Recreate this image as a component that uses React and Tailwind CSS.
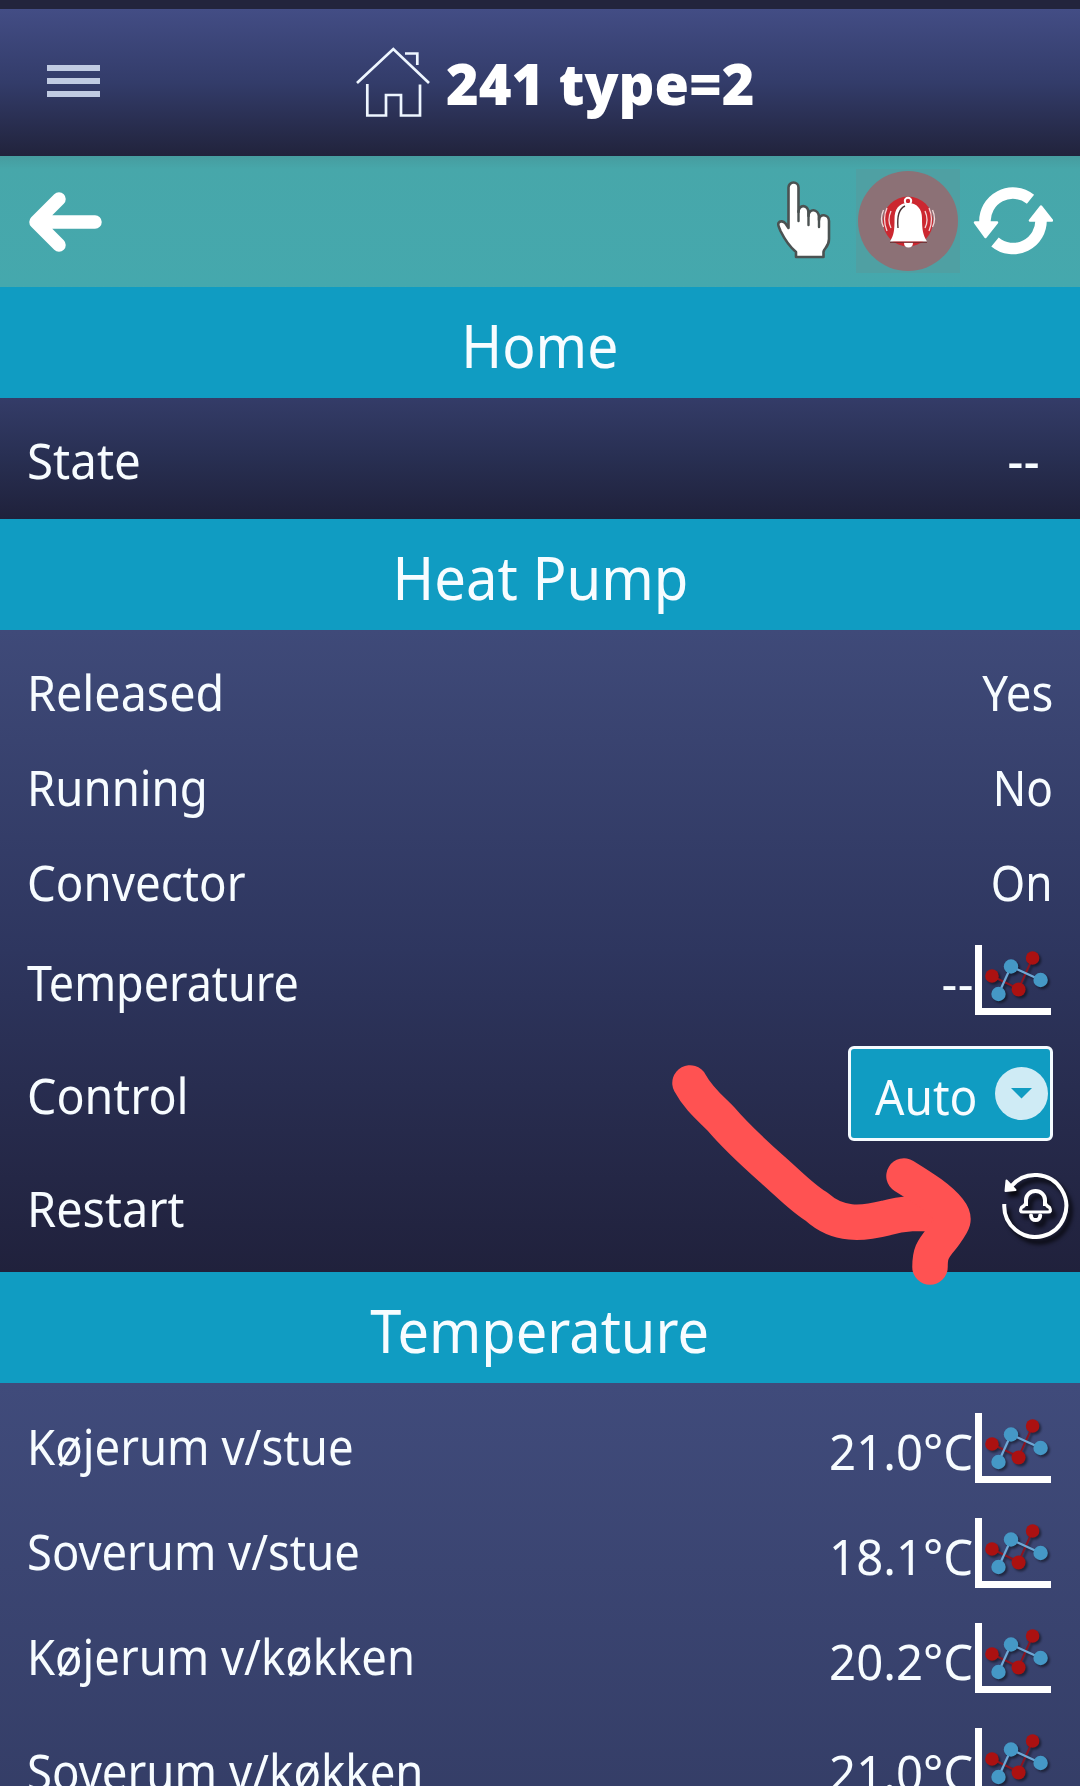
import React from "react";

const body = "inline-block whitespace-nowrap text-[49px] leading-none";

function SectionTitle({ children, scale }) {
  return (
    <h2 className="flex h-[111px] shrink-0 items-center justify-center bg-[#109cc2] pt-[4px]">
      <span className={`inline-block whitespace-nowrap text-[61px] leading-none ${scale}`}>{children}</span>
    </h2>
  );
}

function Row({ label, scale, height, pad = "", children }) {
  return (
    <div className={`flex shrink-0 items-center justify-between pl-[27px] pr-[27px] ${height}`}>
      <span className={`${body} origin-left ${scale} ${pad}`}>{label}</span>
      <div className="flex items-center">{children}</div>
    </div>
  );
}

function Dashes({ className }) {
  return (
    <span className={`text-[49px] leading-none tracking-[0.5px] origin-right inline-block ${className}`}>--</span>
  );
}

function ChartIcon() {
  return (
    <svg width="79" height="72" viewBox="0 0 79 72" className="-mr-[1px] shrink-0">
      <g className="drop-shadow-[2px_2px_1px_rgba(0,0,0,0.45)]">
        <path d="M17 31L43.6 44L57.6 13" fill="none" stroke="#8c1420" strokeWidth="2" />
        <circle cx="17" cy="31" r="6.8" fill="#ab1111" />
        <circle cx="43.6" cy="44.5" r="7" fill="#ab1111" />
        <circle cx="57.6" cy="13" r="6.8" fill="#ab1111" />
        <path d="M23.5 49L36 21.5L65.6 35" fill="none" stroke="#6fa8d6" strokeWidth="2.2" />
        <circle cx="23.5" cy="49" r="7.2" fill="#4598c6" />
        <circle cx="36" cy="21.5" r="7.2" fill="#4598c6" />
        <circle cx="65.6" cy="35" r="7.2" fill="#4598c6" />
      </g>
      <path d="M0 0H7V63H76V70H0Z" fill="#fff" />
    </svg>
  );
}

function RestartIcon() {
  return (
    <svg width="70" height="76" viewBox="0 0 70 76" className="-mr-[17px] overflow-visible drop-shadow-[4px_5px_2px_rgba(0,0,0,0.8)]">
      <g fill="none" stroke="#fff" strokeLinejoin="round">
        <path d="M11.500 17A31 31 0 1 1 4.300 35" strokeWidth="4" />
        <path d="M26 37V31a9.500 9 0 0 1 19 0v6" strokeWidth="4" />
        <path d="M26 33Q25.500 36.500 21.500 38.500Q19 43 23 43H48Q52 43 49.500 38.500Q45.500 36.500 45 33" strokeWidth="3.200" />
        <path d="M31 46.500a4.600 4.600 0 0 0 9.200 0" strokeWidth="4" strokeLinecap="round" />
      </g>
      <path d="M6.500 11.500L15.500 21L5.500 22Z" fill="#fff" stroke="#fff" strokeWidth="2" strokeLinejoin="round" />
    </svg>
  );
}

function HandIcon() {
  return (
    <svg width="56" height="82" viewBox="0 0 56 82" className="mt-[3px]">
      <path
        d="M12.500 6.500a5 5 0 0 1 10 0V31c0-8 10-8 10 1v3c0-8 10-7.500 10.500 1v3c0-7 10-6 10 1V58c0 8-5 9-5.500 13v5H20v-5C14 66 9 59 4.500 50C3 46 1.500 44 2.500 42c1.500-2.500 5-2 7 .5l3 4.500Z"
        fill="#fff" stroke="#4b5252" strokeWidth="2.600" strokeLinejoin="round"
      />
      <path d="M22.500 30v10M32.500 32v12M43 36v10" stroke="#4b5252" strokeWidth="2.400" strokeLinecap="round" />
    </svg>
  );
}

function BellIcon() {
  return (
    <svg width="104" height="104" viewBox="0 0 104 104">
      <rect width="104" height="104" fill="#4fa0a3" />
      <circle cx="52" cy="52" r="50" fill="#8c7176" />
      <circle cx="52" cy="52.500" r="25" fill="#cc2730" />
      <g fill="none" stroke="#f3d7d8" strokeWidth="1.300">
        <path d="M35 42q-4 9 0 17M31 39q-5 11 0 23M27.500 41q-4 9 0 17" />
        <path d="M69 42q4 9 0 17M73 39q5 11 0 23M76.500 41q4 9 0 17" />
      </g>
      <circle cx="52" cy="32" r="3.200" fill="none" stroke="#fff" strokeWidth="2" />
      <path d="M48 73.500h9q0 5-4.500 5t-4.500-5Z" fill="#fff" />
      <path d="M52 34c9 0 14 6 14 15 0 12 1 17 5 23.500H34C38 66 38.500 61 38.500 50 38.500 40 43 34 52 34Z" fill="#fff" />
      <path d="M34 73.300H71" stroke="#6d2a2d" strokeWidth="1" />
      <path d="M42 59C41 48 42 40 49 37" fill="none" stroke="#4c3335" strokeWidth="1.400" />
    </svg>
  );
}

function RefreshIcon() {
  return (
    <svg width="80" height="72" viewBox="0 0 80 72">
      <g fill="none" stroke="#fff" strokeWidth="11.500">
        <path d="M57.500 14.300A28 28 0 0 0 12 38" />
        <path d="M22 57A28 28 0 0 0 68 34" />
      </g>
      <g fill="#fff" stroke="#fff" strokeWidth="2.500" strokeLinejoin="round">
        <path d="M2 37.500H24L12.500 52Z" />
        <path d="M57 35.500H79L68 21.500Z" />
      </g>
    </svg>
  );
}

const rooms = [
  { label: "Køjerum v/stue", value: "21.0°C", scale: "scale-x-[0.929]" },
  { label: "Soverum v/stue", value: "18.1°C", scale: "scale-x-[0.926]" },
  { label: "Køjerum v/køkken", value: "20.2°C", scale: "scale-x-[0.927]" },
  { label: "Soverum v/køkken", value: "21.0°C", scale: "scale-x-[0.93]", last: true },
];

export default function App() {
  return (
    <div className="relative flex h-[1786px] w-[1080px] flex-col overflow-hidden bg-[#22243c] font-['Noto_Sans',sans-serif] text-[#f7fcff]">
      <div className="h-[9px] shrink-0 bg-[#22243c]" />
      <header className="flex h-[147px] shrink-0 items-center bg-linear-to-b from-[#434d85] via-[#333c6a] to-[#21233c]">
        <div className="ml-[47px] mt-[-3px] flex w-[53px] flex-col gap-[7px]">
          <div className="h-[6px] bg-[#c0cbe2]" />
          <div className="h-[6px] bg-[#c0cbe2]" />
          <div className="h-[6px] bg-[#c0cbe2]" />
        </div>
        <svg width="76" height="72" viewBox="0 0 76 72" className="-mt-[2px] ml-[256px]" fill="none" stroke="#eef6ff" strokeWidth="2.700">
          <path d="M1 37L37.300 3L73 37M49 7.500H61.300V19M11.300 38V69.500H30V49H45V69.500H64V38.500" />
        </svg>
        <h1 className="ml-[14px] mt-[1px] origin-left scale-x-[0.98] whitespace-nowrap text-[57px] font-black leading-none text-white">241 type=2</h1>
      </header>
      <div className="flex h-[131px] shrink-0 items-center bg-linear-to-b from-[#469c9f] via-[#47a7aa] via-10% to-[#45a8ad] pl-[28px]">
        <svg width="76" height="62" viewBox="0 0 76 62" fill="none" stroke="#fff" strokeWidth="13.500" strokeLinecap="round" strokeLinejoin="round">
          <path d="M31 8L8 31L31 54M8 31H67" />
        </svg>
        <div className="-mt-[2px] ml-auto flex items-center pr-[27px]">
          <HandIcon />
          <div className="ml-[24px]"><BellIcon /></div>
          <div className="ml-[13px]"><RefreshIcon /></div>
        </div>
      </div>

      <SectionTitle scale="scale-x-[0.905]">Home</SectionTitle>
      <section className="flex h-[121px] shrink-0 flex-col bg-linear-to-b from-[#343c68] via-[#282f52] to-[#1f213b]">
        <Row label="State" scale="scale-x-[0.97]" height="h-[121px]" pad="pt-[4px]">
          <Dashes className="mr-[13px] pt-[4px] font-medium" />
        </Row>
      </section>

      <SectionTitle scale="scale-x-[0.922]">Heat Pump</SectionTitle>
      <section className="flex h-[642px] shrink-0 flex-col bg-linear-to-b from-[#3f4a79] via-[#2e365f] to-[#20213c] pt-[14px]">
        <Row label="Released" scale="scale-x-[0.952]" height="h-[95px]" pad="pt-[2px]">
          <span className={`${body} origin-right scale-x-[0.93] pt-[2px]`}>Yes</span>
        </Row>
        <Row label="Running" scale="scale-x-[0.93]" height="h-[95px]" pad="pt-[2px]">
          <span className={`${body} origin-right scale-x-[0.9] pt-[2px]`}>No</span>
        </Row>
        <Row label="Convector" scale="scale-x-[0.932]" height="h-[95px]" pad="pt-[2px]">
          <span className={`${body} origin-right scale-x-[0.9] pt-[2px]`}>On</span>
        </Row>
        <Row label="Temperature" scale="scale-x-[0.916]" height="h-[104px]" pad="pt-[2px]">
          <Dashes className="mr-[1px] pt-[2px]" />
          <ChartIcon />
        </Row>
        <Row label="Control" scale="scale-x-[0.95]" height="h-[122px]" pad="pt-[3px]">
          <div className="-mt-[2px] flex h-[95px] w-[205px] items-center justify-between rounded-[6px] border-[3px] border-[#f4fbff] bg-[#109cc2] pl-[24px] pr-[2px]">
            <span className={`${body} origin-left scale-x-[0.94] pt-[6px]`}>Auto</span>
            <svg width="53" height="53" viewBox="0 0 53 53" className="-ml-4 shrink-0">
              <circle cx="26.500" cy="26.500" r="26.500" fill="#cfebf5" />
              <path d="M16 21H37L26.500 31.500Z" fill="#109cc2" />
            </svg>
          </div>
        </Row>
        <Row label="Restart" scale="scale-x-[0.956]" height="h-[104px]" pad="pt-[2px]">
          <RestartIcon />
        </Row>
      </section>

      <SectionTitle scale="scale-x-[0.917]">Temperature</SectionTitle>
      <section className="flex shrink-0 flex-col bg-linear-to-b from-[#404b7b] to-[#343d66] pt-[13px]">
        {rooms.map((r) => (
          <Row key={r.label} label={r.label} scale={r.scale} height="h-[105px]" pad={r.last ? "pt-[15px]" : "pb-[5px]"}>
            <span className={`${body} mr-[2px] origin-right scale-x-[0.966] ${r.last ? "pt-[18px]" : "pt-[5px]"}`}>{r.value}</span>
            <ChartIcon />
          </Row>
        ))}
      </section>

      <svg width="1080" height="1786" viewBox="0 0 1080 1786" className="pointer-events-none absolute left-0 top-0" fill="none" stroke="#ff5252" strokeWidth="35.500" strokeLinecap="round" strokeLinejoin="round">
        <path d="M690 1083C698 1098 709 1107 721 1119C738 1139 755 1154 773 1170C790 1185 802 1198 817 1207C838 1226 862 1224 886 1218C910 1211 928 1214 951 1214" />
        <path d="M904 1176C925 1189 939 1198 949 1210C957 1220 952 1224 942 1238C932 1250 930 1254 930 1267" />
      </svg>
    </div>
  );
}
